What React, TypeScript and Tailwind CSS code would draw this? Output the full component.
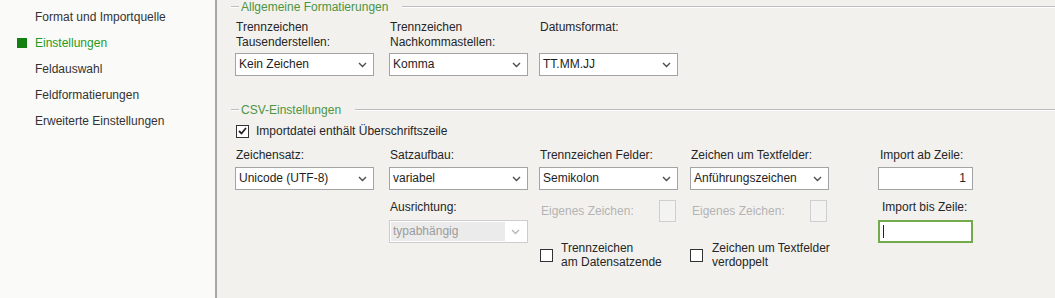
import {ReactNode} from 'react'

const navItems = [
  'Format und Importquelle',
  'Einstellungen',
  'Feldauswahl',
  'Feldformatierungen',
  'Erweiterte Einstellungen',
]

function Chevron({disabled}: {disabled?: boolean}) {
  return (
    <svg width="9" height="6" viewBox="0 0 9 6">
      <path
        d="M1 1l3.5 3.5L8 1"
        fill="none"
        stroke={disabled ? '#b8b8b8' : '#4d4d4d'}
        strokeWidth="1.4"
      />
    </svg>
  )
}

function Select({value, disabled}: {value: string; disabled?: boolean}) {
  if (disabled) {
    return (
      <div className="flex h-[23px] w-[139px] items-stretch border border-[#cdcdcd] bg-white p-px">
        <span className="flex flex-1 items-center bg-[#ebebeb] px-[2px] text-[#9b9b9b]">{value}</span>
        <span className="flex w-[21px] items-center justify-center">
          <Chevron disabled />
        </span>
      </div>
    )
  }
  return (
    <div className="flex h-[23px] w-[139px] items-center border border-[#a3a3a3] bg-white">
      <span className="flex-1 whitespace-nowrap pl-[3px] text-[#1e1e1e]">{value}</span>
      <span className="flex w-[21px] justify-center">
        <Chevron />
      </span>
    </div>
  )
}

function Checkbox({checked}: {checked?: boolean}) {
  return (
    <span className="flex h-[13px] w-[13px] shrink-0 items-center justify-center border border-[#333] bg-white">
      {checked && (
        <svg width="9" height="8" viewBox="0 0 9 8">
          <path d="M1 4l2.5 2.5L8 1" fill="none" stroke="#222" strokeWidth="1.8" />
        </svg>
      )}
    </span>
  )
}

function GroupHeader({children}: {children: ReactNode}) {
  return (
    <div className="flex h-[14px] items-center">
      <div className="h-[2px] w-[8px] border-t border-b border-t-[#bdbdbd] border-b-white" />
      <span className="ml-[2px] mr-[14px] text-[#4e9443]">{children}</span>
      <div className="h-[2px] flex-1 border-t border-b border-t-[#bdbdbd] border-b-white" />
    </div>
  )
}

function OwnChar() {
  return (
    <div className="mt-[10px] flex h-[22px] w-[139px] items-center justify-between">
      <span className="ml-[2px] text-[#b4b4b4]">Eigenes Zeichen:</span>
      <span className="mr-[2px] h-[22px] w-[17px] border border-[#cfcfcf] bg-[#f3f3f1]" />
    </div>
  )
}

export default function App() {
  return (
    <div className="flex h-[298px] w-[1055px] overflow-hidden font-['Liberation_Sans',Arial,sans-serif] text-[12px] leading-[15px] text-[#262626]">
      {/* Navigation */}
      <aside className="w-[217px] shrink-0 border-r-2 border-[#a6a6a6] bg-[#fafaf8] pt-[4px]">
        {navItems.map((item) => {
          const active = item === 'Einstellungen'
          return (
            <div key={item} className="flex h-[26px] items-center pl-[17px]">
              <span className={`h-[10px] w-[10px] ${active ? 'bg-[#118011]' : ''}`} />
              <span className={`ml-[8px] ${active ? 'text-[#1f9a1f]' : 'text-[#333]'}`}>{item}</span>
            </div>
          )
        })}
      </aside>

      {/* Settings */}
      <main className="flex-1 bg-[#f2f1ee] pl-[14px]">
        <GroupHeader>Allgemeine Formatierungen</GroupHeader>
        <div className="mt-[6px] flex pl-[4px]">
          <div className="w-[139px]">
            <div className="ml-px h-[30px]">
              Trennzeichen
              <br />
              Tausenderstellen:
            </div>
            <div className="mt-[3px]">
              <Select value="Kein Zeichen" />
            </div>
          </div>
          <div className="ml-[15px] w-[139px]">
            <div className="ml-px h-[30px]">
              Trennzeichen
              <br />
              Nachkommastellen:
            </div>
            <div className="mt-[3px]">
              <Select value="Komma" />
            </div>
          </div>
          <div className="ml-[11px] w-[139px]">
            <div className="ml-px h-[30px]">Datumsformat:</div>
            <div className="mt-[3px]">
              <Select value="TT.MM.JJ" />
            </div>
          </div>
        </div>

        <div className="mt-[27px]">
          <GroupHeader>CSV-Einstellungen</GroupHeader>
        </div>
        <div className="pl-[4px]">
          <label className="mt-[6px] ml-px flex h-[16px] items-center gap-[7px]">
            <Checkbox checked />
            <span>Importdatei enthält Überschriftszeile</span>
          </label>

          <div className="mt-[9px] flex">
            <div className="w-[139px]">
              <div className="ml-px">Zeichensatz:</div>
              <div className="mt-[4px]">
                <Select value="Unicode (UTF-8)" />
              </div>
            </div>

            <div className="ml-[15px] w-[139px]">
              <div className="ml-px">Satzaufbau:</div>
              <div className="mt-[4px]">
                <Select value="variabel" />
              </div>
              <div className="mt-[10px] ml-px">Ausrichtung:</div>
              <div className="mt-[5px]">
                <Select value="typabhängig" disabled />
              </div>
            </div>

            <div className="ml-[11px] w-[139px]">
              <div className="ml-px whitespace-nowrap">Trennzeichen Felder:</div>
              <div className="mt-[4px]">
                <Select value="Semikolon" />
              </div>
              <OwnChar />
              <div className="mt-[19px] flex items-center">
                <span className="ml-px">
                  <Checkbox />
                </span>
                <span className="ml-[8px] whitespace-nowrap leading-[14px]">
                  Trennzeichen
                  <br />
                  am Datensatzende
                </span>
              </div>
            </div>

            <div className="ml-[12px] w-[139px]">
              <div className="ml-px whitespace-nowrap">Zeichen um Textfelder:</div>
              <div className="mt-[4px]">
                <Select value="Anführungszeichen" />
              </div>
              <OwnChar />
              <div className="mt-[19px] flex items-center">
                <Checkbox />
                <span className="ml-[9px] whitespace-nowrap leading-[14px]">
                  Zeichen um Textfelder
                  <br />
                  verdoppelt
                </span>
              </div>
            </div>

            <div className="ml-[49px] w-[95px]">
              <div className="ml-[2px] whitespace-nowrap">Import ab Zeile:</div>
              <div className="mt-[4px] flex h-[23px] items-center justify-end border border-[#a3a3a3] bg-white pr-[6px]">
                1
              </div>
              <div className="mt-[10px] ml-[4px] whitespace-nowrap">Import bis Zeile:</div>
              <div className="mt-[5px] flex h-[23px] items-center border-2 border-[#72ab4c] bg-white pl-[3px]">
                <span className="h-[13px] w-px bg-[#222]" />
              </div>
            </div>
          </div>
        </div>
      </main>
    </div>
  )
}
